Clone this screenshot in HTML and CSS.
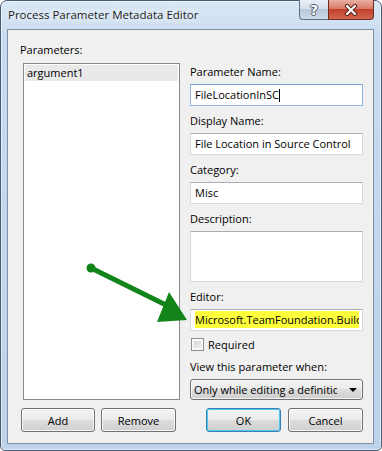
FILE: index.html
```html
<!DOCTYPE html>
<html lang="en">

<head>
    <meta charset="UTF-8">
    <meta name="viewport" content="width=device-width, initial-scale=1.0">
    <title>Process Parameter Metadata Editor</title>
    <link rel="stylesheet" href="styles.css">
</head>

<body>
    <div class="window">
        <div class="titlebar">
            <span class="title">Process Parameter Metadata Editor</span>
            <div class="caption-buttons">
                <button class="cap help">?</button>
                <button class="cap close">
                    <svg width="16" height="12" viewBox="0 0 16 12">
                        <path d="M4 2 L12 10 M12 2 L4 10" stroke="#5a2219" stroke-width="4.2" stroke-linecap="round" fill="none" />
                        <path d="M4 2 L12 10 M12 2 L4 10" stroke="#ffffff" stroke-width="2.2" stroke-linecap="round" fill="none" />
                    </svg>
                </button>
            </div>
        </div>

        <div class="client">
            <div class="main">
                <div class="left">
                    <label class="lbl params-lbl">Parameters:</label>
                    <div class="listbox">
                        <div class="item selected">argument1</div>
                    </div>
                </div>

                <div class="right">
                    <div class="field">
                        <label class="lbl">Parameter Name:</label>
                        <div class="textbox focused">FileLocationInSC<span class="caret"></span></div>
                    </div>
                    <div class="field">
                        <label class="lbl">Display Name:</label>
                        <div class="textbox">File Location in Source Control</div>
                    </div>
                    <div class="field">
                        <label class="lbl">Category:</label>
                        <div class="textbox">Misc</div>
                    </div>
                    <div class="field">
                        <label class="lbl">Description:</label>
                        <div class="textbox multiline"></div>
                    </div>
                    <div class="field">
                        <label class="lbl">Editor:</label>
                        <div class="textbox">
                            <div class="clip"><span class="highlight">Microsoft.TeamFoundation.Build.Controls.ServerFileBrowserEditor</span></div>
                        </div>
                    </div>
                    <div class="check-row">
                        <span class="checkbox"></span>
                        <span>Required</span>
                    </div>
                    <label class="lbl">View this parameter when:</label>
                    <div class="combo">
                        <span class="combo-text">Only while editing a definition</span>
                        <span class="combo-arrow"></span>
                    </div>
                </div>
            </div>

            <div class="buttons">
                <div class="btn-group left-group">
                    <button class="btn btn-add">Add</button>
                    <button class="btn btn-remove">Remove</button>
                </div>
                <div class="btn-group right-group">
                    <button class="btn default">OK</button>
                    <button class="btn">Cancel</button>
                </div>
            </div>
        </div>

        <svg class="arrow" width="382" height="451" viewBox="0 0 382 451">
            <line x1="91" y1="268" x2="166" y2="305" stroke="#13841a" stroke-width="5" />
            <circle cx="91" cy="268" r="4.5" fill="#13841a" />
            <polygon points="169,292 157,322 187,320" fill="#13841a" />
        </svg>
    </div>
</body>

</html>
```

FILE: styles.css
```css
body {
    margin: 0;
    font-family: "Open Sans", "Noto Sans", sans-serif;
    font-size: 11px;
    color: #000;
    background: #fff;
}

.window {
    position: relative;
    width: 382px;
    height: 451px;
    box-sizing: border-box;
    display: flex;
    flex-direction: column;
    padding: 0 7px 6px 6px;
    border: 1px solid #4a5a70;
    border-radius: 7px 7px 5px 5px;
    background: linear-gradient(to bottom, #d9e7f5 0, #c7dbf0 40px, #bdd3eb 100%);
    box-shadow: inset 0 0 0 1px rgba(255, 255, 255, 0.55);
}

/* title bar */

.titlebar {
    height: 28px;
    display: flex;
    justify-content: space-between;
    align-items: flex-start;
    padding-left: 1px;
}

.title {
    margin-top: 6px;
    font-size: 11.5px;
    line-height: 16px;
    color: #1b1b1b;
    text-shadow: 0 0 6px #fff, 0 0 10px #fff;
}

.caption-buttons {
    display: flex;
    margin-top: -1px;
}

.cap {
    height: 20px;
    padding: 0;
    margin: 0;
    display: flex;
    align-items: center;
    justify-content: center;
    border: 1px solid #5c6d84;
    border-top: none;
}

.help {
    width: 29px;
    border-right: none;
    border-radius: 0 0 0 4px;
    background: linear-gradient(to bottom, #e8eff7 0, #d5e0ec 45%, #b9c9db 50%, #cbd8e6 100%);
    color: #fff;
    font-family: "DejaVu Sans", sans-serif;
    font-size: 14px;
    font-weight: bold;
    text-shadow: -1px 0 #4a5566, 1px 0 #4a5566, 0 -1px #4a5566, 0 1px #4a5566;
}

.close {
    width: 46px;
    border-color: #6b2c24;
    border-radius: 0 0 4px 0;
    background: linear-gradient(to bottom, #eab1a3 0, #d77a65 45%, #c1402b 50%, #d3664c 100%);
}

/* client area */

.client {
    flex: 1;
    display: flex;
    flex-direction: column;
    background: #f0f0f0;
    border: 1px solid #7f90a6;
    padding: 12px 10px 11px 13px;
}

.main {
    flex: 1;
    display: grid;
    grid-template-columns: 159px 173px;
    column-gap: 10px;
}

.lbl {
    display: block;
    line-height: 16px;
}

.left {
    display: flex;
    flex-direction: column;
}

.params-lbl {
    margin-left: -1px;
    margin-bottom: 5px;
}

.listbox {
    flex: 1;
    margin-left: 2px;
    background: #fff;
    border: 1px solid #828790;
    padding: 1px;
}

.item {
    line-height: 16px;
    padding-left: 2px;
}

.item.selected {
    background: #e9e9e9;
}

.right {
    display: flex;
    flex-direction: column;
    padding-top: 22px;
}

.field {
    margin-bottom: 7px;
}

.field .lbl {
    margin-bottom: 4px;
}

.textbox {
    height: 22px;
    box-sizing: border-box;
    line-height: 20px;
    padding: 0 4px;
    background: #fff;
    border: 1px solid #d5d9e0;
    border-top-color: #abadb3;
    white-space: nowrap;
    overflow: hidden;
}

.textbox.focused {
    border-color: #8fb5e0;
    border-top-color: #6f9fd6;
}

.textbox.multiline {
    height: 51px;
}

.caret {
    display: inline-block;
    width: 1px;
    height: 13px;
    background: #000;
    vertical-align: -3px;
}

.clip {
    overflow: hidden;
    margin-right: -1px;
}

.highlight {
    background: #ffff3c;
    padding: 1px 0;
}

.check-row {
    display: flex;
    align-items: center;
    gap: 4px;
    height: 13px;
    margin-bottom: 8px;
    margin-left: 1px;
}

.checkbox {
    width: 11px;
    height: 11px;
    border: 1px solid #8f8f8f;
    background: linear-gradient(135deg, #cfd2d6 0, #f4f4f4 100%);
    box-shadow: inset 0 0 0 2px #f7f7f7;
}

.right > .lbl {
    margin-bottom: 4px;
}

.combo {
    height: 21px;
    box-sizing: border-box;
    display: flex;
    align-items: center;
    justify-content: space-between;
    padding: 0 5px 0 3px;
    border: 1px solid #707070;
    border-radius: 3px;
    background: linear-gradient(to bottom, #f2f2f2 0, #ebebeb 50%, #dddddd 50%, #cfcfcf 100%);
    box-shadow: inset 0 0 0 1px rgba(255, 255, 255, 0.7);
}

.combo-text {
    width: 143px;
    overflow: hidden;
    white-space: nowrap;
}

.combo-arrow {
    width: 0;
    height: 0;
    border-left: 4px solid transparent;
    border-right: 4px solid transparent;
    border-top: 4px solid #000;
    margin-top: 1px;
}

/* bottom buttons */

.buttons {
    display: grid;
    grid-template-columns: 159px 173px;
    column-gap: 10px;
    margin-top: 8px;
}

.btn-group {
    display: flex;
    gap: 6px;
}

.right-group {
    justify-content: flex-end;
    gap: 7px;
}

.btn {
    width: 75px;
    height: 24px;
    padding: 0;
    font-family: inherit;
    font-size: 11px;
    color: #000;
    border: 1px solid #707070;
    border-radius: 3px;
    background: linear-gradient(to bottom, #f2f2f2 0, #ebebeb 50%, #dddddd 50%, #cfcfcf 100%);
    box-shadow: inset 0 0 0 1px rgba(255, 255, 255, 0.8);
}

.btn-add {
    width: 74px;
}

.btn.default {
    border-color: #3c7fb1;
    box-shadow: inset 0 0 0 1px #4ec6f4;
}

.arrow {
    position: absolute;
    top: -1px;
    left: -1px;
    pointer-events: none;
}
```
